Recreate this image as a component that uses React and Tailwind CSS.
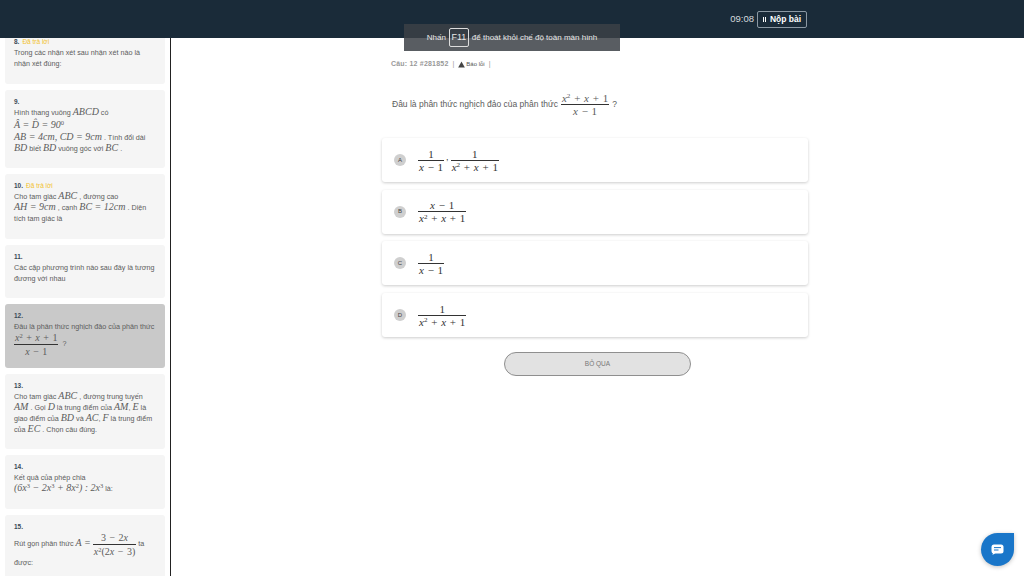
import React from "react";

const M = ({ children }) => (
  <span className="font-['Liberation_Serif',serif] italic text-[10px] leading-none">{children}</span>
);

const Frac = ({ top, bottom, size = "text-[11px]" }) => (
  <span className={`inline-flex flex-col items-center align-middle font-['Liberation_Serif',serif] italic [word-spacing:1px] ${size}`}>
    <span className="h-[12px] px-px leading-[12px] whitespace-nowrap">{top}</span>
    <span className="h-[13px] w-full border-t border-[#333] px-px text-center leading-[13px] whitespace-nowrap">{bottom}</span>
  </span>
);

const Sup = ({ children }) => <sup className="text-[0.65em] not-italic leading-none">{children}</sup>;
const N = ({ children }) => <span className="not-italic">{children}</span>;

const X2 = () => (
  <>
    x<Sup>2</Sup> <N>+</N> x <N>+ 1</N>
  </>
);
const Xm1 = () => (
  <>
    x <N>− 1</N>
  </>
);

const cards = [
  {
    h: "h-[54px]",
    n: "8.",
    done: true,
    body: (
      <>
        Trong các nhận xét sau nhận xét nào là
        <br />
        nhận xét đúng:
      </>
    ),
  },
  {
    h: "h-[78px]",
    n: "9.",
    body: (
      <>
        Hình thang vuông <M>ABCD</M> có
        <div className="pt-[2px]">
          <M>Â = D̂ = 90<Sup>0</Sup></M>
        </div>
        <div className="pt-px">
          <M>AB = 4cm, CD = 9cm</M> . Tính đổi dài
        </div>
        <M>BD</M> biết <M>BD</M> vuông góc với <M>BC</M> .
      </>
    ),
  },
  {
    h: "h-[65px]",
    n: "10.",
    done: true,
    body: (
      <>
        Cho tam giác <M>ABC</M> , đường cao
        <br />
        <M>AH = 9cm</M> , cạnh <M>BC = 12cm</M> . Diện
        <br />
        tích tam giác là
      </>
    ),
  },
  {
    h: "h-[53px]",
    n: "11.",
    body: (
      <>
        Các cặp phương trình nào sau đây là tương
        <br />
        đương với nhau
      </>
    ),
  },
  {
    h: "h-[64px]",
    n: "12.",
    active: true,
    body: (
      <>
        Đâu là phân thức nghịch đảo của phân thức
        <br />
        <span className="inline-block">
          <Frac top={<X2 />} bottom={<Xm1 />} size="text-[10px]" />
          <span className="ml-1">?</span>
        </span>
      </>
    ),
  },
  {
    h: "h-[75px]",
    n: "13.",
    body: (
      <>
        Cho tam giác <M>ABC</M> , đường trung tuyến
        <br />
        <M>AM</M> . Gọi <M>D</M> là trung điểm của <M>AM</M>, <M>E</M> là
        <br />
        giao điểm của <M>BD</M> và <M>AC</M>, <M>F</M> là trung điểm
        <br />
        của <M>EC</M> . Chọn câu đúng.
      </>
    ),
  },
  {
    h: "h-[54px]",
    n: "14.",
    body: (
      <>
        Kết quả của phép chia
        <br />
        <M>(6x<Sup>3</Sup> − 2x<Sup>3</Sup> + 8x<Sup>2</Sup>) : 2x<Sup>3</Sup></M> là:
      </>
    ),
  },
  {
    h: "h-[70px]",
    n: "15.",
    body: (
      <>
        Rút gọn phân thức <M>A =</M>{" "}
        <Frac
          top={<><N>3 − 2</N>x</>}
          bottom={<>x<Sup>2</Sup><N>(2</N>x <N>− 3)</N></>}
          size="text-[10px]"
        />{" "}
        ta
        <br />
        được:
      </>
    ),
  },
];

const options = [
  {
    key: "A",
    math: (
      <span className="inline-flex items-center gap-[2px]">
        <Frac top={<N>1</N>} bottom={<Xm1 />} />
        <span className="mb-[8px] self-end text-[9px]">,</span>
        <Frac top={<N>1</N>} bottom={<X2 />} />
      </span>
    ),
  },
  { key: "B", math: <Frac top={<Xm1 />} bottom={<X2 />} /> },
  { key: "C", math: <Frac top={<N>1</N>} bottom={<Xm1 />} /> },
  { key: "D", math: <Frac top={<N>1</N>} bottom={<X2 />} /> },
];

export default function App() {
  return (
    <div className="relative h-[576px] w-[1024px] overflow-hidden bg-white font-['Liberation_Sans',sans-serif] text-[#444]">
      {/* Top bar */}
      <header className="flex h-[38px] items-center justify-end bg-[#1a2b39] pr-[217px]">
        <span className="mr-[3px] text-[9.5px] text-[#d5dade]">09:08</span>
        <button className="flex h-[17px] w-[50px] items-center justify-center gap-[4px] rounded-[2px] border border-[#8b98a3] text-[8.5px] font-bold text-white">
          <span className="flex gap-px">
            <span className="h-[5px] w-px bg-white" />
            <span className="h-[5px] w-px bg-white" />
          </span>
          Nộp bài
        </button>
      </header>

      {/* Fullscreen hint */}
      <div className="absolute left-[404px] top-[24px] flex h-[27px] w-[216px] items-center justify-center gap-[3px] bg-[#3c4146]/85 text-[8px] text-[#e8e8e8]">
        <span>Nhấn</span>
        <span className="flex h-[19px] w-[20px] items-center justify-center rounded-[2px] border border-[#ddd] text-[9px]">
          F11
        </span>
        <span>để thoát khỏi chế độ toàn màn hình</span>
      </div>

      <div className="flex h-[538px]">
        {/* Question list */}
        <aside className="h-full w-[171px] shrink-0 overflow-hidden border-r border-[#222]">
          <div className="-mt-[8px] flex flex-col gap-[6px] px-[5px]">
            {cards.map((c) => (
              <div
                key={c.n}
                className={`${c.h} shrink-0 rounded-[3px] px-[9px] pt-[6px] text-[7.2px] leading-[11px] text-[#5c5c5c] ${
                  c.active ? "bg-[#c9c9c9]" : "bg-[#f5f5f5]"
                }`}
              >
                <div className="text-[6.5px] font-bold leading-[11px] text-[#3b4a58]">
                  {c.n}
                  {c.done && <span className="ml-[3px] font-normal text-[#f2c230]">Đã trả lời</span>}
                </div>
                <div className="whitespace-nowrap">{c.body}</div>
              </div>
            ))}
          </div>
        </aside>

        {/* Question */}
        <main className="min-w-0 flex-1 pl-[211px]">
          <div className="w-[426px]">
            <div className="mt-[15px] flex h-[22px] items-center gap-[4px] pl-[9px] text-[7px] text-[#999]">
              <span className="font-bold tracking-[0.2px]">Câu: 12 #281852</span>
              <span>|</span>
              <span className="flex items-center gap-[1px] text-[6px] text-[#555]">
                <svg width="7" height="7" viewBox="0 0 10 10" fill="#444">
                  <path d="M5 .8 9.8 9.4H.2z" />
                </svg>
                Báo lỗi
              </span>
              <span>|</span>
            </div>

            <div className="mt-[10px] flex h-[38px] items-center gap-[3px] pl-[10px] text-[8.5px] text-[#5c5c5c]">
              Đâu là phân thức nghịch đảo của phân thức
              <Frac top={<X2 />} bottom={<Xm1 />} />
              <span>?</span>
            </div>

            <div className="mt-[15px] flex flex-col gap-[7.7px]">
              {options.map((o) => (
                <div
                  key={o.key}
                  className="flex h-[44px] items-center rounded-[3px] bg-white pl-[12px] text-[#333] shadow-[0_1px_3px_rgba(0,0,0,0.2)]"
                >
                  <span className="flex h-[12px] w-[12px] shrink-0 items-center justify-center rounded-full bg-[#cfcfcf] text-[6px] text-[#444]">
                    {o.key}
                  </span>
                  <span className="ml-[12px] flex">{o.math}</span>
                </div>
              ))}
            </div>

            <div className="mt-[15px] flex justify-center pl-[5px]">
              <button className="h-[24px] w-[187px] rounded-full border border-[#8f8f8f] bg-[#e2e2e2] text-[6.5px] text-[#777]">
                BỎ QUA
              </button>
            </div>
          </div>
        </main>
      </div>

      {/* Chat launcher */}
      <button className="absolute left-[981px] top-[533px] flex h-[33px] w-[33px] items-center justify-center rounded-full rounded-tr-none bg-[#1976c9] shadow-[0_1px_4px_rgba(0,0,0,0.25)]">
        <svg width="13" height="11" viewBox="0 0 13 11">
          <rect x="0.5" y="0.5" width="12" height="9" rx="2.5" fill="#fff" />
          <path d="M2 9l-.5 2L4.5 9z" fill="#fff" />
          <path d="M3 3.6h7M3 6h4.5" stroke="#1976c9" strokeWidth="1" />
        </svg>
      </button>
    </div>
  );
}
